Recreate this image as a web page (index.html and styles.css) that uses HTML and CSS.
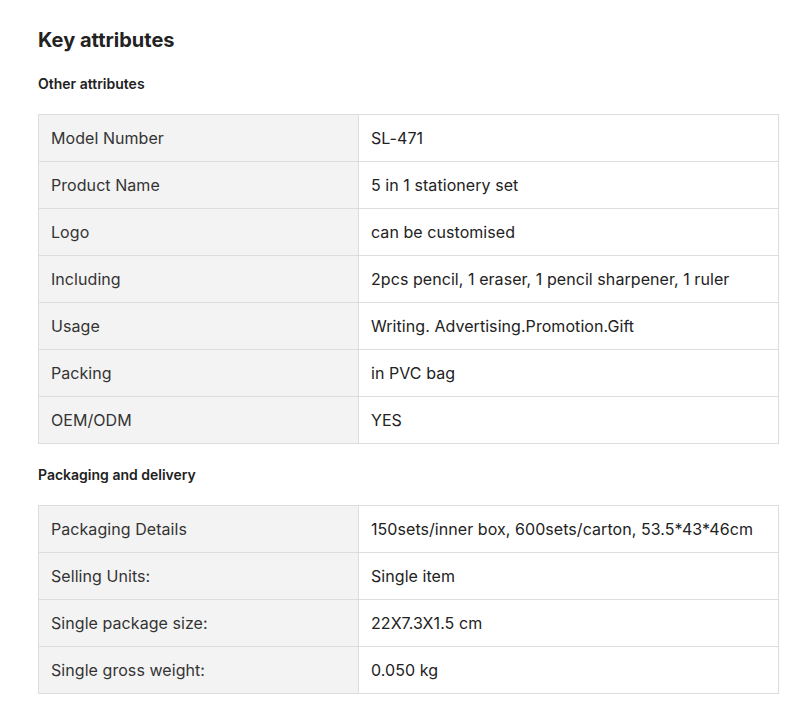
FILE: index.html
```html
<!DOCTYPE html>
<html lang="en">
<head>
  <meta charset="UTF-8" />
  <title>Key attributes</title>
  <link rel="stylesheet" href="styles.css">
</head>
<body>
  <div class="attrs">
    <h2 class="attrs-title">Key attributes</h2>

    <h3 class="group-title">Other attributes</h3>
    <table class="attr-table">
      <tr><td class="name">Model Number</td><td class="value">SL-471</td></tr>
      <tr><td class="name">Product Name</td><td class="value">5 in 1 stationery set</td></tr>
      <tr><td class="name">Logo</td><td class="value">can be customised</td></tr>
      <tr><td class="name">Including</td><td class="value">2pcs pencil, 1 eraser, 1 pencil sharpener, 1 ruler</td></tr>
      <tr><td class="name">Usage</td><td class="value">Writing. Advertising.Promotion.Gift</td></tr>
      <tr><td class="name">Packing</td><td class="value">in PVC bag</td></tr>
      <tr><td class="name">OEM/ODM</td><td class="value">YES</td></tr>
    </table>

    <h3 class="group-title">Packaging and delivery</h3>
    <table class="attr-table">
      <tr><td class="name">Packaging Details</td><td class="value">150sets/inner box, 600sets/carton, 53.5*43*46cm</td></tr>
      <tr><td class="name">Selling Units:</td><td class="value">Single item</td></tr>
      <tr><td class="name">Single package size:</td><td class="value">22X7.3X1.5 cm</td></tr>
      <tr><td class="name">Single gross weight:</td><td class="value">0.050 kg</td></tr>
    </table>
  </div>
</body>
</html>
```
FILE: styles.css
```css
* {
  margin: 0;
  padding: 0;
  box-sizing: border-box;
}

body {
  font-family: Inter, 'Noto Sans', sans-serif;
  background: #fff;
  color: #222;
}

.attrs {
  padding: 26px 8px 0 38px;
  width: 779px;
}

.attrs-title {
  font-size: 20px;
  line-height: 28px;
  font-weight: 700;
  color: #222;
}

.group-title {
  font-size: 14px;
  line-height: 20px;
  font-weight: 600;
  color: #222;
  margin: 20px 0 20px;
}

.attr-table {
  width: 741px;
  border-collapse: collapse;
  font-size: 16px;
  letter-spacing: 0.06px;
  margin-bottom: 21px;
}

.attr-table td {
  height: 47px;
  border: 1px solid #ddd;
  padding: 0 12px;
  vertical-align: middle;
}

.attr-table .name {
  width: 320px;
  background: #f3f3f3;
  color: #333;
}

.attr-table .value {
  color: #222;
}
```
